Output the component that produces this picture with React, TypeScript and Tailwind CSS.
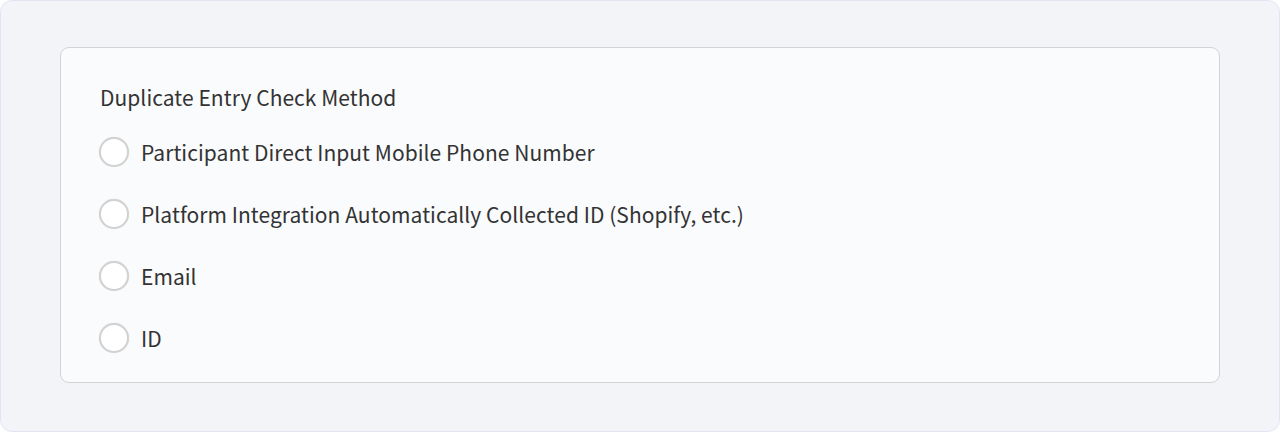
import React from "react";

const options = [
  "Participant Direct Input Mobile Phone Number",
  "Platform Integration Automatically Collected ID (Shopify, etc.)",
  "Email",
  "ID",
];

export default function App() {
  return (
    <div
      className="h-[432px] w-[1280px] rounded-[12px] border border-[#e3e4f3] bg-[#f3f4f8] pl-[59px] pr-[59px] pt-[46px] text-[#333333]"
      style={{ fontFamily: '"Noto Sans CJK KR", "Noto Sans", sans-serif' }}
    >
      <div className="h-[336px] rounded-[9px] border border-[#d3d3d8] bg-[#fafbfd] pl-[38px] pt-[34px]">
        <div className="pl-[1px] text-[21px] leading-[30px] tracking-[0.05px] text-[#333333]">Duplicate Entry Check Method</div>
        <div className="mt-[25px] flex flex-col gap-[32px]">
          {options.map((o) => (
            <label key={o} className="flex h-[30px] items-center gap-[12px]">
              <span className="block h-[30px] w-[30px] rounded-full border-2 border-[#d2d2d2] bg-white shadow-[0_0_1px_rgba(0,0,0,0.15)]" />
              <span className="text-[21px] leading-[30px] tracking-[0.05px] text-[#333333]">{o}</span>
            </label>
          ))}
        </div>
      </div>
    </div>
  );
}
